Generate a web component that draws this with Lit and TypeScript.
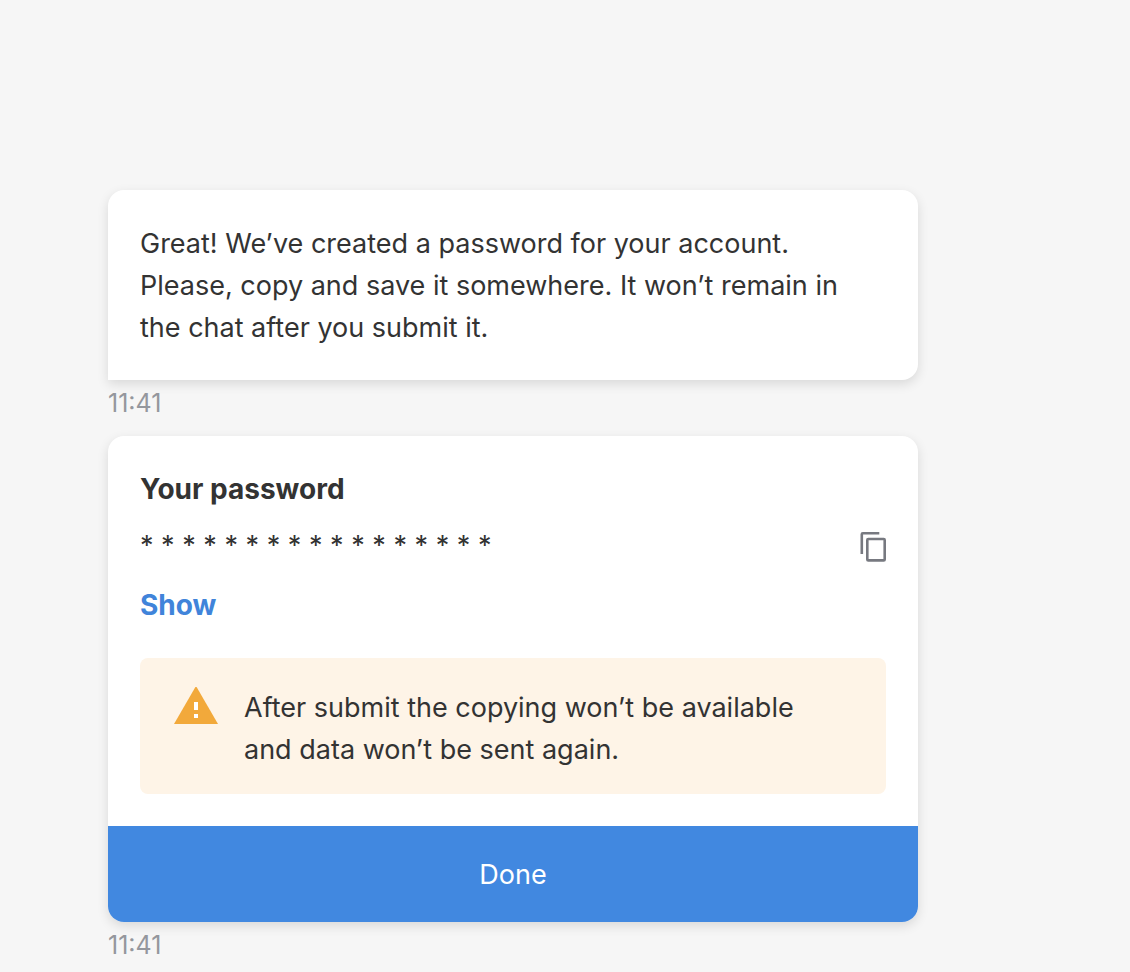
import { LitElement, html, css } from "lit";
import { customElement } from "lit/decorators.js";

@customElement("app-root")
export class AppRoot extends LitElement {
  static styles = css`
    :host {
      display: block;
      box-sizing: border-box;
      min-height: 100vh;
      padding: 190px 212px 0 108px;
      background: #f6f6f6;
      color: #333333;
      font: 27px/42px Inter, "Liberation Sans", sans-serif;
    }
    .bubble {
      background: #fff;
      border-radius: 16px;
      box-shadow: 0 4px 12px rgba(0, 0, 0, 0.12);
      overflow: hidden;
    }
    .message {
      border-bottom-left-radius: 0;
      padding: 33px 48px 31px 32px;
    }
    p { margin: 0; }
    time {
      display: block;
      padding: 7px 0 1px;
      font-size: 25px;
      line-height: 32px;
      color: #94979d;
    }
    .form { margin-top: 16px; }
    .body { padding: 32px; }
    h2 { margin: 0; font-size: 28px; line-height: 42px; font-weight: 700; }
    .row {
      display: flex;
      justify-content: space-between;
      padding: 15px 0 17px;
    }
    button { font: inherit; border: 0; padding: 0; background: none; color: inherit; cursor: pointer; }
    .copy { display: flex; align-items: center; }
    .show { display: block; color: #4084da; font-size: 28px; font-weight: 700; }
    .warning {
      display: flex;
      gap: 26px;
      margin-top: 32px;
      padding: 29px 48px 23px 34px;
      background: #fef4e7;
      border-radius: 8px;
    }
    .warning svg { flex: none; }
    .done {
      display: block;
      width: 100%;
      padding: 28px 0 26px;
      background: #4188e0;
      color: #fff;
    }
  `;

  render() {
    return html`
      <main>
        <p class="bubble message">Great! We’ve created a password for your account. Please, copy and save it somewhere. It won’t remain in the chat after you submit it.</p>
        <time>11:41</time>
        <section class="bubble form">
          <div class="body">
            <h2>Your password</h2>
            <div class="row">
              <span>* * * * * * * * * * * * * * * * *</span>
              <button class="copy" aria-label="Copy password">
                <svg width="28" height="36" viewBox="0 -3 28 36" fill="none" stroke="#777980" stroke-width="2.6">
                  <path d="M3.8 23V3.3a1 1 0 0 1 1-1H21.3" />
                  <rect x="9.3" y="8" width="17.4" height="21.4" rx="1" />
                </svg>
              </button>
            </div>
            <button class="show">Show</button>
            <div class="warning" role="note">
              <svg width="44" height="38" viewBox="0 1 44 38">
                <path d="M22 0 44 38H0Z" fill="#f2a93b" />
                <path d="M20 16h4v8h-4zM20 28h4v4h-4z" fill="#fff" />
              </svg>
              <p>After submit the copying won’t be available and data won’t be sent again.</p>
            </div>
          </div>
          <button class="done">Done</button>
        </section>
        <time>11:41</time>
      </main>
    `;
  }
}
